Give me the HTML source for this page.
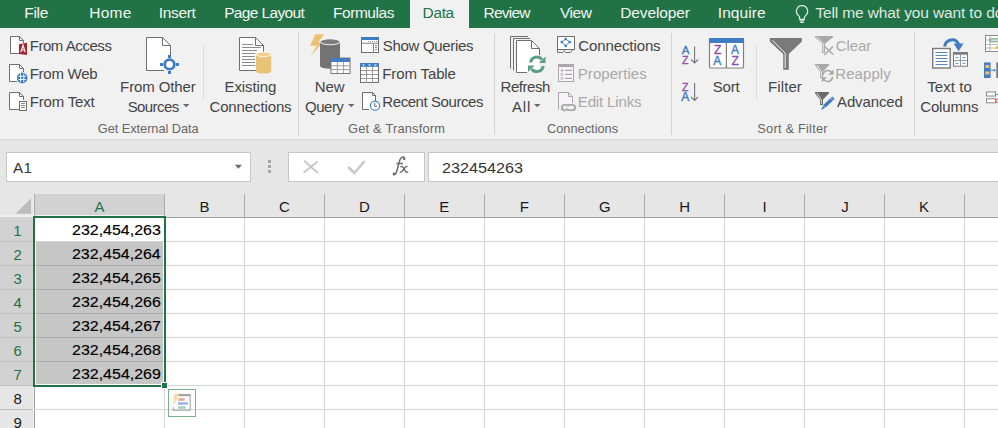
<!DOCTYPE html>
<html><head><meta charset="utf-8"><style>
html,body{margin:0;padding:0;}
body{width:998px;height:428px;overflow:hidden;position:relative;font-family:"Liberation Sans", sans-serif;background:#fff;}
</style></head><body>
<div style="position:absolute;left:0px;top:0px;width:998px;height:28px;background:#217346;"></div><div style="position:absolute;left:410px;top:0px;width:59px;height:29px;background:#f1f1f1;"></div><div style="position:absolute;left:24.26px;top:4.88px;font-size:15.5px;line-height:15.5px;letter-spacing:-0.306px;color:#f4f4f4;white-space:nowrap;">File</div><div style="position:absolute;left:89.26px;top:4.88px;font-size:15.5px;line-height:15.5px;letter-spacing:0.243px;color:#f4f4f4;white-space:nowrap;">Home</div><div style="position:absolute;left:158.80px;top:4.88px;font-size:15.5px;line-height:15.5px;letter-spacing:-0.335px;color:#f4f4f4;white-space:nowrap;">Insert</div><div style="position:absolute;left:224.16px;top:4.88px;font-size:15.5px;line-height:15.5px;letter-spacing:-0.631px;color:#f4f4f4;white-space:nowrap;">Page Layout</div><div style="position:absolute;left:333.06px;top:4.88px;font-size:15.5px;line-height:15.5px;letter-spacing:-0.465px;color:#f4f4f4;white-space:nowrap;">Formulas</div><div style="position:absolute;left:483.46px;top:4.88px;font-size:15.5px;line-height:15.5px;letter-spacing:-0.760px;color:#f4f4f4;white-space:nowrap;">Review</div><div style="position:absolute;left:559.92px;top:4.88px;font-size:15.5px;line-height:15.5px;letter-spacing:-0.449px;color:#f4f4f4;white-space:nowrap;">View</div><div style="position:absolute;left:620.26px;top:4.88px;font-size:15.5px;line-height:15.5px;letter-spacing:-0.129px;color:#f4f4f4;white-space:nowrap;">Developer</div><div style="position:absolute;left:717.81px;top:4.88px;font-size:15.5px;line-height:15.5px;letter-spacing:0.057px;color:#f4f4f4;white-space:nowrap;">Inquire</div><div style="position:absolute;left:422.56px;top:4.88px;font-size:15.5px;line-height:15.5px;letter-spacing:-0.355px;color:#217346;white-space:nowrap;">Data</div><svg style="position:absolute;left:794px;top:4px;overflow:visible" width="16" height="20" viewBox="0 0 16 20"><path d="M8 1.6a5.6 5.6 0 0 0-3.4 10c.8.7 1.1 1.5 1.1 2.6v1.1h4.6v-1.1c0-1.1.4-1.9 1.2-2.6A5.6 5.6 0 0 0 8 1.6z" fill="none" stroke="#e3ebe5" stroke-width="1.2"/><path d="M5.7 16.9h4.6M6.2 18.5h3.6" stroke="#e3ebe5" stroke-width="1.2"/></svg><div style="position:absolute;left:815.39px;top:4.88px;font-size:15.5px;line-height:15.5px;letter-spacing:-0.130px;color:#dfe8e2;white-space:nowrap;">Tell me what you want to do</div><div style="position:absolute;left:0px;top:28px;width:998px;height:111px;background:#f1f1f1;"></div><div style="position:absolute;left:0px;top:139px;width:998px;height:1px;background:#d6d6d6;"></div><div style="position:absolute;left:298px;top:33px;width:1px;height:102px;background:#d2d2d2;"></div><div style="position:absolute;left:494px;top:33px;width:1px;height:102px;background:#d2d2d2;"></div><div style="position:absolute;left:671px;top:33px;width:1px;height:102px;background:#d2d2d2;"></div><div style="position:absolute;left:914px;top:33px;width:1px;height:102px;background:#d2d2d2;"></div><div style="position:absolute;left:203px;top:46px;width:1px;height:54px;background:#dedede;"></div><div style="position:absolute;left:756px;top:46px;width:1px;height:54px;background:#dedede;"></div><div style="position:absolute;left:29.70px;top:38.30px;font-size:15px;line-height:15px;letter-spacing:-0.447px;color:#444444;white-space:nowrap;">From Access</div><div style="position:absolute;left:29.70px;top:66.30px;font-size:15px;line-height:15px;letter-spacing:-0.264px;color:#444444;white-space:nowrap;">From Web</div><div style="position:absolute;left:29.70px;top:94.30px;font-size:15px;line-height:15px;letter-spacing:-0.175px;color:#444444;white-space:nowrap;">From Text</div><div style="position:absolute;left:382.82px;top:38.30px;font-size:15px;line-height:15px;letter-spacing:-0.318px;color:#444444;white-space:nowrap;">Show Queries</div><div style="position:absolute;left:382.30px;top:66.30px;font-size:15px;line-height:15px;letter-spacing:-0.125px;color:#444444;white-space:nowrap;">From Table</div><div style="position:absolute;left:382.30px;top:94.30px;font-size:15px;line-height:15px;letter-spacing:-0.423px;color:#444444;white-space:nowrap;">Recent Sources</div><div style="position:absolute;left:578.25px;top:38.30px;font-size:15px;line-height:15px;letter-spacing:-0.102px;color:#444444;white-space:nowrap;">Connections</div><div style="position:absolute;left:577.80px;top:66.30px;font-size:15px;line-height:15px;letter-spacing:0.058px;color:#a8a8a8;white-space:nowrap;">Properties</div><div style="position:absolute;left:577.80px;top:94.30px;font-size:15px;line-height:15px;letter-spacing:-0.144px;color:#a8a8a8;white-space:nowrap;">Edit Links</div><div style="position:absolute;left:835.75px;top:38.30px;font-size:15px;line-height:15px;letter-spacing:-0.075px;color:#a8a8a8;white-space:nowrap;">Clear</div><div style="position:absolute;left:835.30px;top:66.30px;font-size:15px;line-height:15px;letter-spacing:0.058px;color:#a8a8a8;white-space:nowrap;">Reapply</div><div style="position:absolute;left:837.00px;top:94.30px;font-size:15px;line-height:15px;letter-spacing:-0.114px;color:#444444;white-space:nowrap;">Advanced</div><div style="position:absolute;left:120.10px;top:79.30px;font-size:15px;line-height:15px;letter-spacing:-0.103px;color:#444444;white-space:nowrap;">From Other</div><div style="position:absolute;left:127.63px;top:98.90px;font-size:15px;line-height:15px;letter-spacing:-0.575px;color:#444444;white-space:nowrap;">Sources</div><div style="position:absolute;left:224.50px;top:79.30px;font-size:15px;line-height:15px;letter-spacing:-0.089px;color:#444444;white-space:nowrap;">Existing</div><div style="position:absolute;left:209.45px;top:98.90px;font-size:15px;line-height:15px;letter-spacing:-0.122px;color:#444444;white-space:nowrap;">Connections</div><div style="position:absolute;left:314.70px;top:79.30px;font-size:15px;line-height:15px;letter-spacing:-0.037px;color:#444444;white-space:nowrap;">New</div><div style="position:absolute;left:305.12px;top:98.90px;font-size:15px;line-height:15px;letter-spacing:-0.525px;color:#444444;white-space:nowrap;">Query</div><div style="position:absolute;left:500.50px;top:79.30px;font-size:15px;line-height:15px;letter-spacing:-0.438px;color:#444444;white-space:nowrap;">Refresh</div><div style="position:absolute;left:512.00px;top:98.90px;font-size:15px;line-height:15px;letter-spacing:0.812px;color:#444444;white-space:nowrap;">All</div><div style="position:absolute;left:712.73px;top:79.30px;font-size:15px;line-height:15px;letter-spacing:-0.167px;color:#444444;white-space:nowrap;">Sort</div><div style="position:absolute;left:768.00px;top:79.30px;font-size:15px;line-height:15px;letter-spacing:0.105px;color:#444444;white-space:nowrap;">Filter</div><div style="position:absolute;left:927.20px;top:79.30px;font-size:15px;line-height:15px;letter-spacing:0.071px;color:#444444;white-space:nowrap;">Text to</div><div style="position:absolute;left:920.25px;top:98.90px;font-size:15px;line-height:15px;letter-spacing:-0.150px;color:#444444;white-space:nowrap;">Columns</div><svg style="position:absolute;left:183px;top:104px;overflow:visible" width="7" height="4" viewBox="0 0 7 4"><path d="M0 0h6.5l-3.25 3.3z" fill="#6a6a6a"/></svg><svg style="position:absolute;left:348px;top:104px;overflow:visible" width="7" height="4" viewBox="0 0 7 4"><path d="M0 0h6.5l-3.25 3.3z" fill="#6a6a6a"/></svg><svg style="position:absolute;left:534px;top:104px;overflow:visible" width="7" height="4" viewBox="0 0 7 4"><path d="M0 0h6.5l-3.25 3.3z" fill="#6a6a6a"/></svg><div style="position:absolute;left:97.86px;top:123.16px;font-size:12.8px;line-height:12.8px;letter-spacing:-0.060px;color:#666666;white-space:nowrap;">Get External Data</div><div style="position:absolute;left:348.06px;top:123.16px;font-size:12.8px;line-height:12.8px;letter-spacing:0.216px;color:#666666;white-space:nowrap;">Get &amp; Transform</div><div style="position:absolute;left:546.96px;top:123.16px;font-size:12.8px;line-height:12.8px;letter-spacing:0.002px;color:#666666;white-space:nowrap;">Connections</div><div style="position:absolute;left:757.32px;top:123.16px;font-size:12.8px;line-height:12.8px;letter-spacing:0.221px;color:#666666;white-space:nowrap;">Sort &amp; Filter</div><svg style="position:absolute;left:0px;top:0px;overflow:visible" width="998" height="428" viewBox="0 0 998 428"><path d="M11 53V37H19.5L23 40.5V53z" fill="#ffffff"/><path d="M10.5 53.5V36.5H19.5L23.5 40.5V43" fill="#ffffff" stroke="#6f6f6f" stroke-width="1"/><path d="M19.5 36.5V40.5H23.5" fill="none" stroke="#6f6f6f" stroke-width="1"/><path d="M10.5 53.5H19" stroke="#6f6f6f"/><path d="M19 44.2L27 42.8V55L19 53.9z" fill="#a4262c"/><path d="M20.8 52.2l2.2-7 2.2 7M21.6 50h2.8" stroke="#fff" stroke-width="1.1" fill="none"/><path d="M10 81V65H19.5L23 68.5V81z" fill="#ffffff"/><path d="M9.5 81.5V64.5H19.5L23.5 68.5V72" fill="#ffffff" stroke="#6f6f6f" stroke-width="1"/><path d="M19.5 64.5V68.5H23.5" fill="none" stroke="#6f6f6f" stroke-width="1"/><path d="M9.5 81.5H17" stroke="#6f6f6f"/><circle cx="22.2" cy="77.9" r="5.3" fill="#3f7cc2"/><path d="M18.5 76.3h7.4M18.5 79.5h7.4M20.6 73.5v8.8M23.8 73.5v8.8" stroke="#fff" stroke-width="0.9"/><path d="M10 109V93H19.5L23 96.5V109z" fill="#ffffff"/><path d="M9.5 109.5V92.5H19.5L23.5 96.5V100" fill="#ffffff" stroke="#6f6f6f" stroke-width="1"/><path d="M19.5 92.5V96.5H23.5" fill="none" stroke="#6f6f6f" stroke-width="1"/><path d="M9.5 109.5H19" stroke="#6f6f6f"/><rect x="19.5" y="101.5" width="7" height="9" fill="#fff" stroke="#6f6f6f"/><path d="M21 103.5h4M21 105.5h4M21 107.5h4" stroke="#8a8a8a" stroke-width="1"/><path d="M147 70V38H162.5L170 45.5V70z" fill="#ffffff"/><path d="M146.5 70.5V37.5H162.5L170.5 45.5V55" fill="#ffffff" stroke="#6f6f6f" stroke-width="1"/><path d="M162.5 37.5V45.5H170.5" fill="none" stroke="#6f6f6f" stroke-width="1"/><path d="M146.5 70.5H164" stroke="#6f6f6f"/><circle cx="169.5" cy="64.4" r="4.8" fill="#fff" stroke="#3f7cc2" stroke-width="2.8"/><path d="M160 64.4h3M176 64.4h3M169.5 55v3M169.5 71v3" stroke="#3f7cc2" stroke-width="3"/><path d="M240 70V38H255.5L263 45.5V70z" fill="#ffffff"/><path d="M239.5 70.5V37.5H255.5L263.5 45.5V52" fill="#ffffff" stroke="#6f6f6f" stroke-width="1"/><path d="M255.5 37.5V45.5H263.5" fill="none" stroke="#6f6f6f" stroke-width="1"/><path d="M239.5 70.5H256" stroke="#6f6f6f"/><path d="M242 44.5H253" stroke="#8c8c8c" stroke-width="1"/><path d="M242 47.5H261" stroke="#8c8c8c" stroke-width="1"/><path d="M242 50.5H257" stroke="#8c8c8c" stroke-width="1"/><path d="M242 53.5H255" stroke="#8c8c8c" stroke-width="1"/><path d="M242 56.5H255" stroke="#8c8c8c" stroke-width="1"/><path d="M242 59.5H255" stroke="#8c8c8c" stroke-width="1"/><path d="M242 62.5H255" stroke="#8c8c8c" stroke-width="1"/><path d="M242 65.5H255" stroke="#8c8c8c" stroke-width="1"/><path d="M256 54.3V71.3A7.6 2.3 0 0 0 271.2 71.3V54.3z" fill="#e9c377"/><ellipse cx="263.6" cy="54.3" rx="7.6" ry="2.3" fill="#efcf8e" stroke="#fff" stroke-width="0.8"/><path d="M315.2 34.3H324L318.4 42.5H322.5L310.2 57L316.8 45.7H310.2z" fill="#f0c071"/><path d="M320 41.8V66A10 2.8 0 0 0 340 66V41.8z" fill="#737373"/><ellipse cx="330" cy="41.8" rx="10" ry="3" fill="#7d7d7d" stroke="#fff" stroke-width="0.9"/><rect x="331" y="58" width="19" height="15.5" fill="#fff" stroke="#7a7a7a"/><rect x="331" y="58" width="19" height="4" fill="#3f7cc2"/><path d="M337.3 62v11M343.6 62v11M331 65.8h19M331 69.6h19" stroke="#9a9a9a" stroke-width="1"/><rect x="361.5" y="37.5" width="17" height="15" fill="#fff" stroke="#6f6f6f"/><rect x="361" y="37" width="18" height="3" fill="#3f7cc2"/><path d="M362 43.3h16M373.5 43.3v9" stroke="#888"/><circle cx="368.5" cy="41.6" r="0.6" fill="#888"/><circle cx="370.5" cy="41.6" r="0.6" fill="#888"/><circle cx="372.5" cy="41.6" r="0.6" fill="#888"/><circle cx="374.5" cy="41.6" r="0.6" fill="#888"/><circle cx="376.5" cy="41.6" r="0.6" fill="#888"/><path d="M375 45.5h2M375 47.5h2M375 49.5h2" stroke="#888"/><rect x="360.5" y="63.5" width="18" height="19" fill="#fff" stroke="#6f6f6f"/><rect x="360" y="63" width="19" height="3.8" fill="#3f7cc2"/><path d="M366.5 67v16M372.5 67v16M361 70.5h17M361 74.5h17M361 78.5h17" stroke="#999"/><path d="M362 64.4h3l-1.5 1.6zM368 64.4h3l-1.5 1.6zM374 64.4h3l-1.5 1.6z" fill="#fff"/><path d="M363 109V93H372.5L375 95.5V109z" fill="#ffffff"/><path d="M362.5 109.5V92.5H372.5L375.5 95.5V101" fill="#ffffff" stroke="#6f6f6f" stroke-width="1"/><path d="M372.5 92.5V95.5H375.5" fill="none" stroke="#6f6f6f" stroke-width="1"/><path d="M362.5 109.5H369" stroke="#6f6f6f"/><circle cx="375" cy="105.7" r="4.6" fill="#fff" stroke="#3f7cc2" stroke-width="1.1"/><path d="M374.7 103v3.3h2.5" fill="none" stroke="#555" stroke-width="0.9"/><path d="M510.5 68.5V36.5H528M513.5 70.5V38.5H530" fill="none" stroke="#6f6f6f"/><path d="M517 72V41H531.5L539 48.5V72z" fill="#ffffff"/><path d="M516.5 72.5V40.5H531.5L539.5 48.5V55" fill="#ffffff" stroke="#6f6f6f" stroke-width="1"/><path d="M531.5 40.5V48.5H539.5" fill="none" stroke="#6f6f6f" stroke-width="1"/><path d="M516.5 72.5H527" stroke="#6f6f6f"/><path d="M530.5 62.5A6.5 6.5 0 0 1 542 59.5" fill="none" stroke="#5e9e87" stroke-width="3"/><path d="M545.5 56.5V63H539z" fill="#5e9e87"/><path d="M543.2 66A6.5 6.5 0 0 1 531.6 69" fill="none" stroke="#5e9e87" stroke-width="3"/><path d="M528 72V65.5H534.5z" fill="#5e9e87"/><rect x="557.5" y="36.5" width="17" height="13" fill="#fff" stroke="#6f6f6f"/><path d="M557.5 50V52.5H563L565 50M565 52.5H570.5L572.5 50" fill="none" stroke="#6f6f6f"/><path d="M565.7 39L561.8 42L565.7 45.9L569.7 42z" fill="none" stroke="#3f7cc2" stroke-width="0.9"/><rect x="564.5" y="37.8" width="2.4" height="2.4" fill="#3f7cc2"/><rect x="560.6" y="40.8" width="2.4" height="2.4" fill="#3f7cc2"/><rect x="568.5" y="40.8" width="2.4" height="2.4" fill="#3f7cc2"/><rect x="564.5" y="44.7" width="2.4" height="2.4" fill="#3f7cc2"/><rect x="558.5" y="64.5" width="15" height="17" fill="#f8f6f8" stroke="#a8a8a8"/><rect x="558" y="64" width="16" height="3" fill="#a8a8a8"/><circle cx="562" cy="70.4" r="1.2" fill="#a8a8a8"/><circle cx="562" cy="74.4" r="1.1" fill="none" stroke="#a8a8a8" stroke-width="0.8"/><circle cx="562" cy="78.4" r="1.1" fill="none" stroke="#a8a8a8" stroke-width="0.8"/><path d="M565 70.4h7M565 74.4h7M565 78.4h7" stroke="#a8a8a8" stroke-width="1.1"/><path d="M559 109V93H568.5L572 96.5V109z" fill="#f7f4f7"/><path d="M558.5 109.5V92.5H568.5L572.5 96.5V103" fill="#f7f4f7" stroke="#a8a8a8" stroke-width="1"/><path d="M568.5 92.5V96.5H572.5" fill="none" stroke="#a8a8a8" stroke-width="1"/><path d="M558.5 109.5V104" stroke="#a8a8a8"/><path d="M566 110A2.6 2.6 0 0 1 563.4 110H564A2.6 2.6 0 0 1 564 104.9H566.6A2.6 2.6 0 0 1 568.5 106.5" fill="none" stroke="#a8a8a8" stroke-width="1.9"/><path d="M568 104.9H572.6A2.6 2.6 0 0 1 572.6 110.1H568.5A2.6 2.6 0 0 1 566.2 108.4" fill="none" stroke="#a8a8a8" stroke-width="1.9"/><text x="681.8" y="54.4" font-family="Liberation Sans" font-size="11.5" fill="#3f7cc2" stroke="#3f7cc2" stroke-width="0.35">A</text><text x="682" y="63.6" font-family="Liberation Sans" font-size="10.5" fill="#8e4cae" stroke="#8e4cae" stroke-width="0.35">Z</text><path d="M694.6 46.5V63M691.2 59.5L694.6 63L698 59.5" fill="none" stroke="#777" stroke-width="1.1"/><text x="682" y="90.6" font-family="Liberation Sans" font-size="10.5" fill="#8e4cae" stroke="#8e4cae" stroke-width="0.35">Z</text><text x="681.3" y="101" font-family="Liberation Sans" font-size="12" fill="#3f7cc2" stroke="#3f7cc2" stroke-width="0.35">A</text><path d="M694.6 83V100.5M691.2 97L694.6 100.5L698 97" fill="none" stroke="#777" stroke-width="1.1"/><rect x="709.5" y="38.5" width="34" height="29.5" rx="1" fill="#fff" stroke="#808080" stroke-width="1.2"/><rect x="709" y="38" width="35" height="5" fill="#3f7cc2"/><path d="M726.4 43v25" stroke="#808080" stroke-width="1.2"/><text x="714.0" y="53.6" font-family="Liberation Sans" font-size="12" fill="#8e4cae" stroke="#8e4cae" stroke-width="0.35">Z</text><text x="713.3" y="64.7" font-family="Liberation Sans" font-size="12" fill="#3f7cc2" stroke="#3f7cc2" stroke-width="0.35">A</text><text x="731.1" y="53.6" font-family="Liberation Sans" font-size="12" fill="#3f7cc2" stroke="#3f7cc2" stroke-width="0.35">A</text><text x="731.4" y="64.7" font-family="Liberation Sans" font-size="12" fill="#8e4cae" stroke="#8e4cae" stroke-width="0.35">Z</text><path d="M769.8 37.9H801.9V41.5L788.8 54.1V69.7H783.2V54.1L769.8 41.5z" fill="#7a7a7a"/><path d="M772.5 40.3L785.2 53.2V68" fill="none" stroke="#fff" stroke-width="0.9"/><path d="M815 36H833V37.3L825.0 43.5V53H822.0V43.5L815 37.3z" fill="#a8a8a8"/><path d="M817 37.1L823.3 43.6V52" fill="none" stroke="#fff" stroke-width="0.8"/><path d="M824.8 46.8L833.2 54.5M833 46.5L824.3 55" stroke="#a8a8a8" stroke-width="1.5"/><path d="M815 64H829V65.3L823.0 71.5V78H820.0V71.5L815 65.3z" fill="#a8a8a8"/><path d="M817 65.1L821.3 71.6V77" fill="none" stroke="#fff" stroke-width="0.8"/><path d="M823 75A4.8 4.8 0 0 1 831.5 72.3" fill="none" stroke="#a8a8a8" stroke-width="1.6"/><path d="M833.6 69.5v5.2h-5.2z" fill="#a8a8a8"/><path d="M832.5 77A4.8 4.8 0 0 1 824 79.7" fill="none" stroke="#a8a8a8" stroke-width="1.6"/><path d="M821.8 82.5v-5.2h5.2z" fill="#a8a8a8"/><path d="M815 92H829V93.3L823.0 99.5V105H820.0V99.5L815 93.3z" fill="#6a6a6a"/><path d="M817 93.1L821.3 99.6V104" fill="none" stroke="#fff" stroke-width="0.8"/><path d="M821 110.3L823.5 104.8L832.3 96.6L834.6 99L825.8 107.2z" fill="#3f7cc2"/><path d="M823.3 105.6l2.2 2.3M830.8 98.2l2.2 2.3" stroke="#f1f1f1" stroke-width="0.7"/><rect x="932.7" y="48.5" width="17.5" height="19.5" fill="#fff" stroke="#7a7a7a" stroke-width="1.4"/><path d="M935.5 52.5H947.5" stroke="#3f7cc2" stroke-width="0.9"/><path d="M935.5 55.5H947.5" stroke="#3f7cc2" stroke-width="0.9"/><path d="M935.5 58.5H947.5" stroke="#3f7cc2" stroke-width="0.9"/><path d="M935.5 61.5H947.5" stroke="#3f7cc2" stroke-width="0.9"/><path d="M935.5 64.5H947.5" stroke="#3f7cc2" stroke-width="0.9"/><rect x="953.5" y="52.7" width="14" height="13.5" fill="#fff" stroke="#7a7a7a"/><rect x="953" y="52.2" width="15" height="2.5" fill="#7a7a7a"/><path d="M960.5 55v11M954 60.5h13" stroke="#999"/><path d="M955.5 57.7h3M962.5 57.7h3M955.5 63.3h3M962.5 63.3h3" stroke="#3f7cc2" stroke-width="0.9"/><path d="M944.6 46.5C945.5 40, 955.5 36.5, 958.6 44.5" fill="none" stroke="#3f7cc2" stroke-width="3"/><path d="M953.6 43.6H963.6L958.6 51.2z" fill="#3f7cc2"/><rect x="985.5" y="35.5" width="14" height="16" fill="#fff" stroke="#8a8a8a"/><path d="M986 40h13M986 44.5h13M986 48h13M990 36v16" stroke="#aaa" stroke-width="0.8"/><rect x="990" y="38.8" width="9" height="3" fill="none" stroke="#5ea47a" stroke-width="1"/><rect x="996" y="46" width="3" height="3" fill="#e8b860"/><rect x="984" y="62.4" width="6.6" height="15.6" fill="#3f7cc2"/><rect x="985.3" y="65" width="4" height="3" fill="#f0c071"/><rect x="985.3" y="71.5" width="4" height="3" fill="#f0c071"/><path d="M990.8 70.2h4" stroke="#3f7cc2" stroke-width="1"/><path d="M994 68.7l2 1.5-2 1.5z" fill="#3f7cc2"/><rect x="996.3" y="62.4" width="2" height="15.6" fill="#777"/><rect x="986.5" y="92" width="9" height="4" fill="#fff" stroke="#8a8a8a"/><rect x="986.5" y="98.8" width="9" height="4" fill="#fff" stroke="#8a8a8a"/><path d="M996 94l1 1 2-2" stroke="#5ea47a" fill="none"/><circle cx="998" cy="100.8" r="2" fill="none" stroke="#e0604a"/></svg><div style="position:absolute;left:0px;top:140px;width:998px;height:54px;background:#e6e6e6;"></div><div style="position:absolute;left:6px;top:152px;width:245px;height:30px;background:#ffffff;box-sizing:border-box;border:1px solid #c6c6c6"></div><div style="position:absolute;left:12.90px;top:159.93px;font-size:15.2px;line-height:15.2px;letter-spacing:0.540px;color:#333333;white-space:nowrap;">A1</div><svg style="position:absolute;left:234px;top:164px;overflow:visible" width="9" height="6" viewBox="0 0 9 6"><path d="M0.8 0.8h7.2l-3.6 4z" fill="#6d6d6d"/></svg><div style="position:absolute;left:268px;top:160px;width:3px;height:3px;background:#a6a6a6;"></div><div style="position:absolute;left:268px;top:165px;width:3px;height:3px;background:#a6a6a6;"></div><div style="position:absolute;left:268px;top:170px;width:3px;height:3px;background:#a6a6a6;"></div><div style="position:absolute;left:288px;top:152px;width:137px;height:30px;background:#ffffff;box-sizing:border-box;border:1px solid #c6c6c6"></div><svg style="position:absolute;left:0px;top:0px;overflow:visible" width="998" height="428" viewBox="0 0 998 428"><path d="M304.8 161.3L317.3 172.5M316.9 162L304.2 172.2" stroke="#c8c8c8" stroke-width="2" stroke-linecap="round"/></svg><svg style="position:absolute;left:0px;top:0px;overflow:visible" width="998" height="428" viewBox="0 0 998 428"><path d="M349 167.8L354.5 173L363.8 162" fill="none" stroke="#c8c8c8" stroke-width="2.6" stroke-linecap="round" stroke-linejoin="round"/></svg><svg style="position:absolute;left:0px;top:0px;overflow:visible" width="998" height="428" viewBox="0 0 998 428"><path d="M393.2 174.8C395.8 175.3 396.8 172.5 397.8 167.5L399.3 161.5C400.3 157.5 402.3 156.5 404.8 157.3M396.3 163.6H403" fill="none" stroke="#6d6d6d" stroke-width="1.5"/><circle cx="404.2" cy="158.8" r="1.3" fill="#6d6d6d"/><circle cx="393.9" cy="173.7" r="1.3" fill="#6d6d6d"/><path d="M400.3 167C401.8 166 402.8 166.5 403.8 168.5L405.3 171.2C406.1 172.6 407 172.8 408.2 171.8M407.6 166.6C406.6 166.2 405.8 166.6 404.6 168L402.3 171C401.5 172.3 400.6 172.6 399.8 172.2" fill="none" stroke="#6d6d6d" stroke-width="1.4"/></svg><div style="position:absolute;left:428px;top:152px;width:580px;height:30px;background:#ffffff;box-sizing:border-box;border:1px solid #c6c6c6"></div><div style="position:absolute;left:441.89px;top:160.10px;font-size:15px;line-height:15px;transform:scaleX(1.0770);transform-origin:0 0;color:#333333;white-space:nowrap;">232454263</div><div style="position:absolute;left:0px;top:194px;width:998px;height:234px;background:#ffffff;"></div><div style="position:absolute;left:0px;top:194px;width:998px;height:23px;background:#e6e6e6;"></div><div style="position:absolute;left:34px;top:217px;width:964px;height:1px;background:#a0a0a0;"></div><svg style="position:absolute;left:0px;top:194px;overflow:visible" width="34" height="23" viewBox="0 0 34 23"><path d="M15.6 19.8h15.4V4.3z" fill="#bcbcbc"/></svg><div style="position:absolute;left:0px;top:215px;width:33px;height:2px;background:#eeeeee;"></div><div style="position:absolute;left:0px;top:217px;width:33px;height:1px;background:#d8d8d8;"></div><div style="position:absolute;left:33px;top:194px;width:1px;height:23px;background:#f2f2f2;"></div><div style="position:absolute;left:34px;top:194px;width:1px;height:23px;background:#a9a9a9;"></div><div style="position:absolute;left:35px;top:194px;width:129px;height:21px;background:#d2d2d2;"></div><div style="position:absolute;left:35px;top:215px;width:129px;height:1px;background:#f4f4f4;"></div><div style="position:absolute;left:164px;top:194px;width:1px;height:23px;background:#ababab;"></div><div style="position:absolute;left:94.61px;top:199.10px;font-size:15px;line-height:15px;letter-spacing:0.000px;color:#217346;white-space:nowrap;">A</div><div style="position:absolute;left:244px;top:194px;width:1px;height:23px;background:#ababab;"></div><div style="position:absolute;left:199.39px;top:199.10px;font-size:15px;line-height:15px;letter-spacing:0.000px;color:#1a1a1a;white-space:nowrap;">B</div><div style="position:absolute;left:324px;top:194px;width:1px;height:23px;background:#ababab;"></div><div style="position:absolute;left:279.09px;top:199.10px;font-size:15px;line-height:15px;letter-spacing:0.000px;color:#1a1a1a;white-space:nowrap;">C</div><div style="position:absolute;left:404px;top:194px;width:1px;height:23px;background:#ababab;"></div><div style="position:absolute;left:358.94px;top:199.10px;font-size:15px;line-height:15px;letter-spacing:0.000px;color:#1a1a1a;white-space:nowrap;">D</div><div style="position:absolute;left:484px;top:194px;width:1px;height:23px;background:#ababab;"></div><div style="position:absolute;left:439.31px;top:199.10px;font-size:15px;line-height:15px;letter-spacing:0.000px;color:#1a1a1a;white-space:nowrap;">E</div><div style="position:absolute;left:564px;top:194px;width:1px;height:23px;background:#ababab;"></div><div style="position:absolute;left:519.73px;top:199.10px;font-size:15px;line-height:15px;letter-spacing:0.000px;color:#1a1a1a;white-space:nowrap;">F</div><div style="position:absolute;left:644px;top:194px;width:1px;height:23px;background:#ababab;"></div><div style="position:absolute;left:598.94px;top:199.10px;font-size:15px;line-height:15px;letter-spacing:0.000px;color:#1a1a1a;white-space:nowrap;">G</div><div style="position:absolute;left:724px;top:194px;width:1px;height:23px;background:#ababab;"></div><div style="position:absolute;left:679.20px;top:199.10px;font-size:15px;line-height:15px;letter-spacing:0.000px;color:#1a1a1a;white-space:nowrap;">H</div><div style="position:absolute;left:804px;top:194px;width:1px;height:23px;background:#ababab;"></div><div style="position:absolute;left:762.54px;top:199.10px;font-size:15px;line-height:15px;letter-spacing:0.000px;color:#1a1a1a;white-space:nowrap;">I</div><div style="position:absolute;left:884px;top:194px;width:1px;height:23px;background:#ababab;"></div><div style="position:absolute;left:841.30px;top:199.10px;font-size:15px;line-height:15px;letter-spacing:0.000px;color:#1a1a1a;white-space:nowrap;">J</div><div style="position:absolute;left:964px;top:194px;width:1px;height:23px;background:#ababab;"></div><div style="position:absolute;left:919.09px;top:199.10px;font-size:15px;line-height:15px;letter-spacing:0.000px;color:#1a1a1a;white-space:nowrap;">K</div><div style="position:absolute;left:1044px;top:194px;width:1px;height:23px;background:#ababab;"></div><div style="position:absolute;left:1000.06px;top:199.10px;font-size:15px;line-height:15px;letter-spacing:0.000px;color:#1a1a1a;white-space:nowrap;">L</div><div style="position:absolute;left:0px;top:218px;width:33px;height:210px;background:#e6e6e6;"></div><div style="position:absolute;left:0px;top:218px;width:33px;height:167px;background:#d2d2d2;"></div><div style="position:absolute;left:33px;top:218px;width:1px;height:210px;background:#f2f2f2;"></div><div style="position:absolute;left:34px;top:218px;width:1px;height:210px;background:#9d9d9d;"></div><div style="position:absolute;left:0px;top:241px;width:33px;height:1px;background:#bfbfbf;"></div><div style="position:absolute;left:13.31px;top:222.50px;font-size:15px;line-height:15px;letter-spacing:0.000px;color:#217346;white-space:nowrap;">1</div><div style="position:absolute;left:0px;top:265px;width:33px;height:1px;background:#bfbfbf;"></div><div style="position:absolute;left:13.54px;top:246.50px;font-size:15px;line-height:15px;letter-spacing:0.000px;color:#217346;white-space:nowrap;">2</div><div style="position:absolute;left:0px;top:289px;width:33px;height:1px;background:#bfbfbf;"></div><div style="position:absolute;left:13.54px;top:270.50px;font-size:15px;line-height:15px;letter-spacing:0.000px;color:#217346;white-space:nowrap;">3</div><div style="position:absolute;left:0px;top:313px;width:33px;height:1px;background:#bfbfbf;"></div><div style="position:absolute;left:13.61px;top:294.50px;font-size:15px;line-height:15px;letter-spacing:0.000px;color:#217346;white-space:nowrap;">4</div><div style="position:absolute;left:0px;top:337px;width:33px;height:1px;background:#bfbfbf;"></div><div style="position:absolute;left:13.54px;top:318.50px;font-size:15px;line-height:15px;letter-spacing:0.000px;color:#217346;white-space:nowrap;">5</div><div style="position:absolute;left:0px;top:361px;width:33px;height:1px;background:#bfbfbf;"></div><div style="position:absolute;left:13.46px;top:342.50px;font-size:15px;line-height:15px;letter-spacing:0.000px;color:#217346;white-space:nowrap;">6</div><div style="position:absolute;left:0px;top:385px;width:33px;height:1px;background:#bfbfbf;"></div><div style="position:absolute;left:13.54px;top:366.50px;font-size:15px;line-height:15px;letter-spacing:0.000px;color:#217346;white-space:nowrap;">7</div><div style="position:absolute;left:0px;top:409px;width:33px;height:1px;background:#bfbfbf;"></div><div style="position:absolute;left:13.50px;top:390.50px;font-size:15px;line-height:15px;letter-spacing:0.000px;color:#1a1a1a;white-space:nowrap;">8</div><div style="position:absolute;left:0px;top:433px;width:33px;height:1px;background:#bfbfbf;"></div><div style="position:absolute;left:13.54px;top:414.50px;font-size:15px;line-height:15px;letter-spacing:0.000px;color:#1a1a1a;white-space:nowrap;">9</div><div style="position:absolute;left:34px;top:241px;width:964px;height:1px;background:#d4d4d4;"></div><div style="position:absolute;left:34px;top:265px;width:964px;height:1px;background:#d4d4d4;"></div><div style="position:absolute;left:34px;top:289px;width:964px;height:1px;background:#d4d4d4;"></div><div style="position:absolute;left:34px;top:313px;width:964px;height:1px;background:#d4d4d4;"></div><div style="position:absolute;left:34px;top:337px;width:964px;height:1px;background:#d4d4d4;"></div><div style="position:absolute;left:34px;top:361px;width:964px;height:1px;background:#d4d4d4;"></div><div style="position:absolute;left:34px;top:385px;width:964px;height:1px;background:#d4d4d4;"></div><div style="position:absolute;left:34px;top:409px;width:964px;height:1px;background:#d4d4d4;"></div><div style="position:absolute;left:34px;top:433px;width:964px;height:1px;background:#d4d4d4;"></div><div style="position:absolute;left:164px;top:218px;width:1px;height:210px;background:#d4d4d4;"></div><div style="position:absolute;left:244px;top:218px;width:1px;height:210px;background:#d4d4d4;"></div><div style="position:absolute;left:324px;top:218px;width:1px;height:210px;background:#d4d4d4;"></div><div style="position:absolute;left:404px;top:218px;width:1px;height:210px;background:#d4d4d4;"></div><div style="position:absolute;left:484px;top:218px;width:1px;height:210px;background:#d4d4d4;"></div><div style="position:absolute;left:564px;top:218px;width:1px;height:210px;background:#d4d4d4;"></div><div style="position:absolute;left:644px;top:218px;width:1px;height:210px;background:#d4d4d4;"></div><div style="position:absolute;left:724px;top:218px;width:1px;height:210px;background:#d4d4d4;"></div><div style="position:absolute;left:804px;top:218px;width:1px;height:210px;background:#d4d4d4;"></div><div style="position:absolute;left:884px;top:218px;width:1px;height:210px;background:#d4d4d4;"></div><div style="position:absolute;left:964px;top:218px;width:1px;height:210px;background:#d4d4d4;"></div><div style="position:absolute;left:1044px;top:218px;width:1px;height:210px;background:#d4d4d4;"></div><div style="position:absolute;left:36px;top:242px;width:127px;height:142px;background:#c6c6c6;"></div><div style="position:absolute;left:36px;top:265px;width:127px;height:1px;background:#acacac;"></div><div style="position:absolute;left:36px;top:289px;width:127px;height:1px;background:#acacac;"></div><div style="position:absolute;left:36px;top:313px;width:127px;height:1px;background:#acacac;"></div><div style="position:absolute;left:36px;top:337px;width:127px;height:1px;background:#acacac;"></div><div style="position:absolute;left:36px;top:361px;width:127px;height:1px;background:#acacac;"></div><div style="position:absolute;left:36px;top:385px;width:127px;height:1px;background:#acacac;"></div><div style="position:absolute;left:33px;top:216px;width:133px;height:2px;background:#217346;"></div><div style="position:absolute;left:33px;top:216px;width:2px;height:171px;background:#217346;"></div><div style="position:absolute;left:164px;top:216px;width:2px;height:171px;background:#217346;"></div><div style="position:absolute;left:33px;top:385px;width:133px;height:2px;background:#217346;"></div><div style="position:absolute;left:162px;top:383px;width:5px;height:5px;background:#217346;outline:1px solid #fff"></div><div style="position:absolute;left:71.80px;top:223.24px;font-size:14.6px;line-height:14.6px;transform:scaleX(1.0944);transform-origin:0 0;color:#000000;white-space:nowrap;-webkit-text-stroke:0.15px #000;">232,454,263</div><div style="position:absolute;left:71.80px;top:247.24px;font-size:14.6px;line-height:14.6px;transform:scaleX(1.0924);transform-origin:0 0;color:#000000;white-space:nowrap;-webkit-text-stroke:0.15px #000;">232,454,264</div><div style="position:absolute;left:71.80px;top:271.24px;font-size:14.6px;line-height:14.6px;transform:scaleX(1.0944);transform-origin:0 0;color:#000000;white-space:nowrap;-webkit-text-stroke:0.15px #000;">232,454,265</div><div style="position:absolute;left:71.80px;top:295.24px;font-size:14.6px;line-height:14.6px;transform:scaleX(1.0944);transform-origin:0 0;color:#000000;white-space:nowrap;-webkit-text-stroke:0.15px #000;">232,454,266</div><div style="position:absolute;left:71.80px;top:319.24px;font-size:14.6px;line-height:14.6px;transform:scaleX(1.0964);transform-origin:0 0;color:#000000;white-space:nowrap;-webkit-text-stroke:0.15px #000;">232,454,267</div><div style="position:absolute;left:71.80px;top:343.24px;font-size:14.6px;line-height:14.6px;transform:scaleX(1.0944);transform-origin:0 0;color:#000000;white-space:nowrap;-webkit-text-stroke:0.15px #000;">232,454,268</div><div style="position:absolute;left:71.80px;top:367.24px;font-size:14.6px;line-height:14.6px;transform:scaleX(1.0954);transform-origin:0 0;color:#000000;white-space:nowrap;-webkit-text-stroke:0.15px #000;">232,454,269</div><div style="position:absolute;left:168px;top:389px;width:28px;height:28px;background:transparent;box-sizing:border-box;border:1px solid #7ab08c"></div><svg style="position:absolute;left:0px;top:0px;overflow:visible" width="998" height="428" viewBox="0 0 998 428"><path d="M178.7 394.1H190.7V396.3H177.5z" fill="#a4a4a4"/><path d="M190.2 396V410.3H173.3V407.2" fill="none" stroke="#a4a4a4" stroke-width="1.1"/><path d="M175 393.4H179.5L177 397.6H179L172.4 405.9L174.6 399.3H172.3z" fill="#f5ddaa"/><path d="M179 398.2H184.7V400.8H178z" fill="#eba18d"/><rect x="178" y="402.2" width="10" height="2.6" fill="#9bb7df"/><rect x="178" y="406.3" width="7.8" height="2.5" fill="#a6d3bf"/></svg>
</body></html>
